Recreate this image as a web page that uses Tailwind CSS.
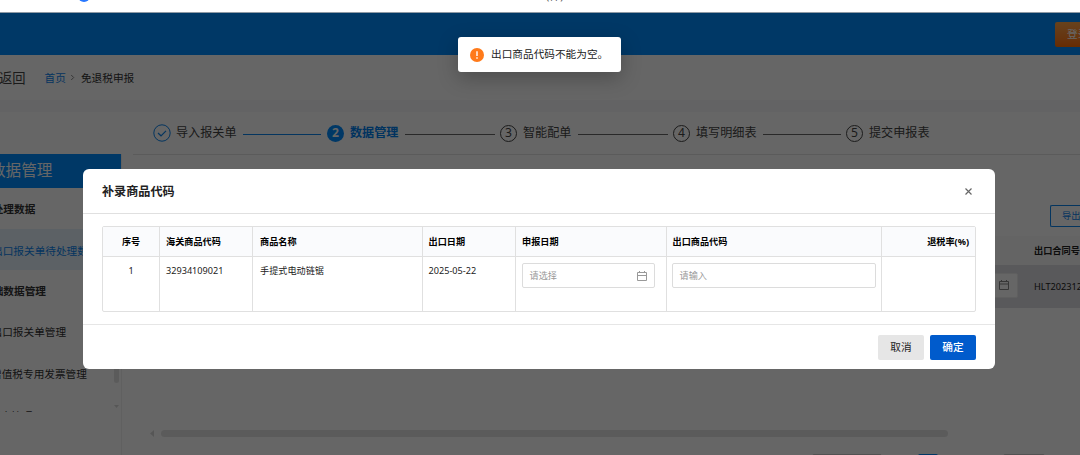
<!DOCTYPE html>
<html lang="zh-CN">
<head>
    <meta charset="UTF-8">
    <meta name="viewport" content="width=device-width, initial-scale=1.0">
    <title>免退税申报</title>
    <script src="https://cdn.jsdelivr.net/npm/@tailwindcss/browser@4"></script>
</head>
<body class="w-[1080px] h-[455px] overflow-hidden bg-white font-['Noto_Sans','Noto_Sans_CJK_SC',sans-serif] text-[#222222] whitespace-nowrap">
    <!-- Bottom edge of the browser toolbar -->
    <div class="flex items-start h-[13px] overflow-hidden border-b border-[#8f9aa5]">
        <div class="w-3 h-3 ml-[78px] -mt-[10px] shrink-0 rounded-full bg-[#2878ff]"></div>
        <span class="ml-[456px] -mt-[11px] text-[11px] leading-[14px] text-[#555555]">(件)</span>
    </div>
    <div class="relative h-[442px] overflow-hidden">
        <!-- Top bar -->
        <header class="flex items-center h-[42px] bg-[#008cff]">
            <button class="w-[60px] h-[25px] ml-[1055px] mt-[1px] shrink-0 rounded-[2px] pl-3 pb-[2px] text-left text-[10.67px] text-white bg-linear-to-b from-[#ffa548] to-[#ff6e00]">登录</button>
        </header>
        <!-- Breadcrumb -->
        <nav class="flex items-center h-[45px] bg-white">
            <span class="-ml-[1px] mt-[3px] text-[13.3px] text-[#444444]">返回</span>
            <a class="ml-[19px] text-[10.67px] text-[#0a84ee]">首页</a>
            <svg class="w-[5px] h-[7px] ml-[4px]" viewBox="0 0 5 7" fill="none" stroke="#888888"><path d="M1.2 1 3.7 3.5 1.2 6"/></svg>
            <span class="ml-[6px] text-[10.67px] text-[#333333]">免退税申报</span>
        </nav>
        <div class="h-[12px] bg-[#f7f7fb]"></div>
        <!-- Steps -->
        <div class="flex items-center h-[42px] pl-[153px] bg-white text-[12.1px] text-[#444444]">
            <svg class="w-[18px] h-[18px] shrink-0" viewBox="0 0 18 18" fill="none" stroke="#0a84ee"><circle cx="9" cy="9" r="8.2"/><path d="m5 9 3 2.8 5-5" stroke-width="1.2"/></svg>
            <span class="w-[72px] pl-[5px]">导入报关单</span>
            <span class="w-[78px] h-px mr-[6px] mt-[2px] bg-[#0a84ee]"></span>
            <span class="w-[17px] h-[17px] flex justify-center items-center rounded-full bg-[#008cff] text-white font-bold">2</span>
            <span class="w-[61px] pl-[6px] font-bold text-[#0080ee]">数据管理</span>
            <span class="w-[90px] h-px mr-[5px] mt-[2px] bg-[#666666]"></span>
            <span class="w-[17px] h-[17px] flex justify-center items-center rounded-full border border-[#444444]">3</span>
            <span class="w-[61px] pl-[6px]">智能配单</span>
            <span class="w-[90px] h-px mr-[5px] mt-[2px] bg-[#666666]"></span>
            <span class="w-[17px] h-[17px] flex justify-center items-center rounded-full border border-[#444444]">4</span>
            <span class="w-[73px] pl-[6px]">填写明细表</span>
            <span class="w-[78px] h-px mr-[5px] mt-[2px] bg-[#666666]"></span>
            <span class="w-[17px] h-[17px] flex justify-center items-center rounded-full border border-[#444444]">5</span>
            <span class="pl-[6px]">提交申报表</span>
        </div>
        <div class="flex h-[301px]">
            <!-- Sidebar -->
            <aside class="w-[122px] shrink-0 border-r border-[#f0f0f0] overflow-hidden">
                <div class="flex items-center w-[121px] h-[34px] -indent-[10px] bg-[#008cff] text-[15.6px] text-white">数据管理</div>
                <div class="flex h-[224px]">
                    <ul class="w-[113px] overflow-hidden text-[10.67px] text-[#333333]">
                        <li class="flex items-center h-[41px] -indent-[18px] font-bold">待处理数据</li>
                        <li class="flex items-center h-[41px] -indent-[8px] pt-[2px] bg-[#e6f2fc] text-[#0a84ee]">出口报关单待处理数据</li>
                        <li class="flex items-center h-[41px] -indent-[18px] font-bold">基础数据管理</li>
                        <li class="flex items-center h-[42px] -indent-[8.5px]">出口报关单管理</li>
                        <li class="flex items-center h-[41px] -indent-[9px]">增值税专用发票管理</li>
                        <li class="flex items-center h-[43px] -indent-[10px]">报表管理</li>
                    </ul>
                    <div class="flex flex-col items-center justify-between w-[7px]">
                        <span class="w-[5px] h-[195px] rounded-full bg-[#e4e4e4]"></span>
                        <svg class="w-[5px] h-[3px] mb-[4px]" viewBox="0 0 5 3"><path d="M0 0h5L2.5 3z" fill="#d8d8d8"/></svg>
                    </div>
                </div>
            </aside>
            <main class="flex flex-col w-[947px] shrink-0 ml-[11px] overflow-hidden border-t border-[#e4e4e4] text-[9.2px]">
                <div class="flex shrink-0 justify-end mt-[50px]">
                    <button class="w-[30px] h-[22px] pl-[11px] text-left rounded-l-[2px] border border-r-0 border-[#0a84ee] text-[#0a84ee]">导出</button>
                </div>
                <div class="flex shrink-0 items-center h-[29px] mt-[9px] pl-[901px] bg-[#fafafa] font-bold">出口合同号</div>
                <div class="flex shrink-0 items-center h-[43px] bg-[#dfdfe4]">
                    <div class="flex shrink-0 items-center justify-end w-[135px] h-[25px] ml-[750px] mt-[-3px] pr-[7px] rounded-[2px] border border-[#eeeeee] bg-white">
                        <svg class="w-[12px] h-[12px]" viewBox="0 0 12 12" fill="none" stroke="#888888"><path d="M1.5 2.5h9v8h-9zM1.5 5h9M3.5 1v2M8.5 1v2"/></svg>
                    </div>
                    <span class="shrink-0 ml-[16px]">HLT20231205</span>
                </div>
                <!-- Horizontal scrollbar -->
                <div class="flex shrink-0 items-center h-[8px] mt-[121px] pl-[17px]">
                    <svg class="w-[4px] h-[7px]" viewBox="0 0 4 7"><path d="M4 0v7L0 3.5z" fill="#d8d8d8"/></svg>
                    <span class="w-[787px] h-[7px] ml-[7px] rounded-full bg-[#e4e4e4]"></span>
                </div>
                <!-- Pagination -->
                <div class="flex shrink-0 h-[20px] mt-[17px] pl-[679px]">
                    <span class="w-[70px] border border-[#cccccc] rounded-[2px]"></span>
                    <span class="w-[20px] ml-[36px] bg-[#008cff] rounded-[2px]"></span>
                    <span class="w-[42px] ml-[65px] border border-[#cccccc] rounded-[2px]"></span>
                </div>
            </main>
        </div>

        <div class="absolute inset-0 bg-black/60"></div>

        <!-- Modal -->
        <section class="absolute left-[83px] top-[156px] flex flex-col w-[912px] h-[200px] rounded-[6px] bg-white">
            <div class="flex items-center justify-between h-[45px] pl-[19px] pr-[23px] border-b border-[#e0e0e0]">
                <h2 class="mt-[2px] text-[12.1px] font-bold">补录商品代码</h2>
                <svg class="w-[7px] h-[7px]" viewBox="0 0 7 7" stroke="#666666" stroke-width="1.2" fill="none"><path d="m.5.5 6 6M6.5.5l-6 6"/></svg>
            </div>
            <div class="h-[110px] px-[19px] pt-[12px]">
                <div class="grid grid-cols-[57px_93px_169.5px_93.5px_150.500px_215px_93.500px] grid-rows-[30px_54px] w-[874px] h-[86px] rounded-[2px] border border-[#e0e0e0] text-[9.15px]">
                    <div class="flex items-center justify-center border-r border-b border-[#e0e0e0] bg-[#fafbfd] font-bold text-black">序号</div>
                    <div class="flex items-center pl-[6px] border-r border-b border-[#e0e0e0] bg-[#fafbfd] font-bold text-black">海关商品代码</div>
                    <div class="flex items-center pl-[7px] border-r border-b border-[#e0e0e0] bg-[#fafbfd] font-bold text-black">商品名称</div>
                    <div class="flex items-center pl-[6px] border-r border-b border-[#e0e0e0] bg-[#fafbfd] font-bold text-black">出口日期</div>
                    <div class="flex items-center pl-[6px] border-r border-b border-[#e0e0e0] bg-[#fafbfd] font-bold text-black">申报日期</div>
                    <div class="flex items-center pl-[6px] border-r border-b border-[#e0e0e0] bg-[#fafbfd] font-bold text-black">出口商品代码</div>
                    <div class="flex items-center justify-end pr-[6px] border-b border-[#e0e0e0] bg-[#fafbfd] font-bold text-black">退税率(%)</div>

                    <div class="pt-[7px] leading-[14px] text-center border-r border-[#e0e0e0]">1</div>
                    <div class="pt-[7px] leading-[14px] pl-[6px] border-r border-[#e0e0e0]">32934109021</div>
                    <div class="pt-[7px] leading-[14px] pl-[7px] border-r border-[#e0e0e0]">手提式电动链锯</div>
                    <div class="pt-[7px] leading-[14px] pl-[6px] border-r border-[#e0e0e0]">2025-05-22</div>
                    <div class="pt-[6px] pl-[5.500px] border-r border-[#e0e0e0]">
                        <div class="flex items-center justify-between w-[133px] h-[25px] pl-[7px] pr-[6px] rounded-[2px] border border-[#dcdcdc] text-[#999999]">
                            请选择
                            <svg class="w-[12px] h-[12px]" viewBox="0 0 12 12" fill="none" stroke="#999999"><path d="M1.5 2.5h9v8h-9zM1.5 5.5h9M3.5 1v2M8.5 1v2"/></svg>
                        </div>
                    </div>
                    <div class="pt-[6px] pl-[5px] border-r border-[#e0e0e0]">
                        <div class="flex items-center w-[204px] h-[25px] pl-[7px] rounded-[2px] border border-[#dcdcdc] text-[#999999]">请输入</div>
                    </div>
                    <div></div>
                </div>
            </div>
            <div class="flex items-center justify-end gap-[6px] flex-1 pr-[19px] border-t border-[#e6e6e6] text-[10.67px]">
                <button class="w-[46px] h-[25px] rounded-[2px] bg-[#e6e6e6]">取消</button>
                <button class="w-[46px] h-[25px] rounded-[2px] bg-[#005bcc] text-white font-medium">确定</button>
            </div>
        </section>

        <!-- Toast message -->
        <div class="absolute left-[458px] top-[24px] flex items-center w-[163px] h-[35px] pl-[12px] rounded-[3px] bg-white text-[10.67px] shadow-[0_6px_20px_rgba(0,0,0,0.25)]">
            <svg class="w-[14px] h-[14px] shrink-0" viewBox="0 0 14 14"><circle cx="7" cy="7" r="7" fill="#ff7a1a"/><path d="M7 3.3v4.7M7 9.3v1.4" stroke="#ffffff" stroke-width="1.4"/></svg>
            <span class="ml-[7px] -mt-px">出口商品代码不能为空。</span>
        </div>
    </div>
</body>
</html>
